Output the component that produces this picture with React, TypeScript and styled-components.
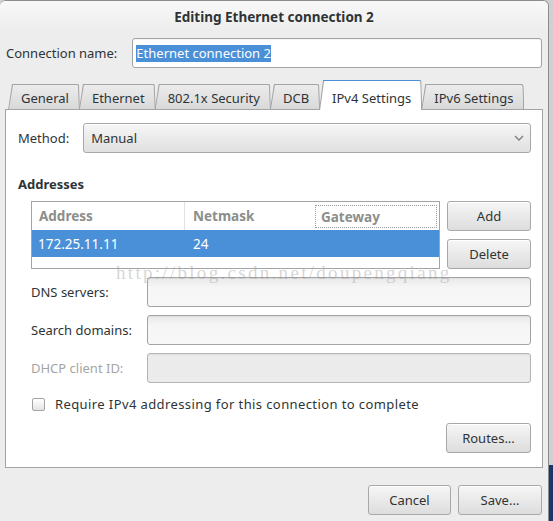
import styled, { createGlobalStyle } from 'styled-components';

const GlobalStyle = createGlobalStyle`
    html, body {
        margin: 0;
        width: 553px;
        height: 521px;
        overflow: hidden;
        background: linear-gradient(180deg, #d0d0d0 0, #d0d0d0 465px, #1b3668 465px);
        font-family: "Noto Sans", "DejaVu Sans", sans-serif;
        font-size: 13px;
        color: #2e3436;
    }
    * {
        box-sizing: border-box;
    }
`;

const Dialog = styled.div`
    position: relative;
    width: 549px;
    height: 521px;
    background: #ededed;
    border-top: 1px solid #8c8c8c;
    border-right: 1px solid #8c8c8c;
    border-radius: 6px 6px 0 0;
    overflow: hidden;
    display: flex;
    flex-direction: column;
`;

const TitleBar = styled.div`
    height: 31px;
    display: flex;
    align-items: center;
    justify-content: center;
    background: linear-gradient(180deg, #f8f8f8, #ededed);
    font-weight: 700;
    font-size: 13.5px;
`;

const NameRow = styled.div`
    display: flex;
    align-items: center;
    gap: 15px;
    padding: 6px 6px 0 6px;
`;

const Label = styled.span<{ $disabled?: boolean }>`
    white-space: nowrap;
    color: ${(p) => (p.$disabled ? '#a4a6a4' : '#2e3436')};
`;

const Entry = styled.div<{ $tone?: 'white' | 'soft' | 'off' }>`
    flex: 1;
    height: 30px;
    display: flex;
    align-items: center;
    padding: 0 3px;
    border: 1px solid ${(p) => (p.$tone === 'off' ? '#b4b4b4' : '#a3a3a3')};
    border-radius: 3px;
    background: ${(p) =>
        p.$tone === 'white'
            ? '#ffffff'
            : p.$tone === 'off'
            ? '#ebebeb'
            : 'linear-gradient(180deg, #e9e9e9 0, #f6f6f6 35%, #f7f7f7 100%)'};
    box-shadow: inset 0 1px 1px rgba(0, 0, 0, 0.05);
`;

const Selected = styled.span`
    background: #4a90d9;
    color: #ffffff;
    line-height: 17px;
`;

const TabRow = styled.div`
    position: relative;
    z-index: 1;
    display: flex;
    align-items: flex-end;
    height: 30px;
    margin: 12px 0 -1px 8px;
`;

const tabShape = 'polygon(4px 0, calc(100% - 1px) 0, 100% 100%, 0 100%)';

const Tab = styled.div<{ $active?: boolean }>`
    position: relative;
    z-index: ${(p) => (p.$active ? 2 : 1)};
    height: ${(p) => (p.$active ? 30 : 26)}px;
    margin-right: -1px;
    padding: 0 11px 3px 13px;
    display: flex;
    align-items: flex-end;
    line-height: 18px;
    white-space: nowrap;
    &::before {
        content: '';
        position: absolute;
        inset: 0;
        background: ${(p) =>
            p.$active ? 'linear-gradient(180deg, #4a90d9 0, #4a90d9 1px, #a4a4a4 1px)' : '#a4a4a4'};
        clip-path: ${tabShape};
        border-radius: 3px 3px 0 0;
    }
    &::after {
        content: '';
        position: absolute;
        inset: ${(p) => (p.$active ? '1px 1px 0 1px' : '1px 1px 1px 1px')};
        background: ${(p) => (p.$active ? '#ffffff' : 'linear-gradient(180deg, #ececec, #d9d9d9)')};
        clip-path: ${tabShape};
        border-radius: 2px 2px 0 0;
    }
    span {
        position: relative;
        z-index: 1;
    }
`;

const Panel = styled.div`
    margin: 0 5px;
    height: 359px;
    background: #ffffff;
    border: 1px solid #a4a4a4;
    padding: 13px 11px 14px 12px;
    display: flex;
    flex-direction: column;
`;

const MethodRow = styled.div`
    display: flex;
    align-items: center;
    gap: 14px;
`;

const Combo = styled.div`
    flex: 1;
    height: 30px;
    display: flex;
    align-items: center;
    justify-content: space-between;
    padding: 0 6px 0 7px;
    border: 1px solid #a8a8a8;
    border-radius: 3px;
    background: linear-gradient(180deg, #f6f6f6, #e0e0e0);
    box-shadow: inset 0 1px #ffffff;
`;

const SectionTitle = styled.div`
    margin-top: 22px;
    font-weight: 700;
    line-height: 18px;
`;

const AddressBlock = styled.div`
    display: flex;
    gap: 7px;
    margin: 8px 0 0 13px;
`;

const Table = styled.div`
    flex: 1;
    height: 68px;
    border: 1px solid #a4a4a4;
    background: #ffffff;
`;

const TableRow = styled.div<{ $head?: boolean }>`
    display: grid;
    grid-template-columns: 153px 129px 1fr;
    height: ${(p) => (p.$head ? 28 : 27)}px;
    background: ${(p) => (p.$head ? '#ffffff' : '#4a90d9')};
    color: ${(p) => (p.$head ? '#8c8e8b' : '#ffffff')};
    font-weight: ${(p) => (p.$head ? 700 : 400)};
    font-size: 13.5px;
`;

const Cell = styled.div<{ $pad?: number; $sep?: boolean; $focus?: boolean }>`
    display: flex;
    align-items: center;
    padding-left: ${(p) => p.$pad ?? 7}px;
    border-right: ${(p) => (p.$sep ? '1px solid #e2e2e2' : 'none')};
    ${(p) => (p.$focus ? 'margin: 3px 2px 2px 1px; border: 1px dotted #9a9a9a; padding-left: 5px;' : '')}
`;

const SideButtons = styled.div`
    display: flex;
    flex-direction: column;
    gap: 8px;
`;

const Button = styled.button<{ $w?: number }>`
    width: ${(p) => p.$w ?? 84}px;
    height: 30px;
    padding: 0;
    border: 1px solid #a8a8a8;
    border-radius: 3px;
    background: linear-gradient(180deg, #f6f6f6, #dddddd);
    box-shadow: inset 0 1px #ffffff;
    font: inherit;
    color: #2e3436;
`;

const FormGrid = styled.div`
    display: grid;
    grid-template-columns: 116px 1fr;
    grid-auto-rows: 30px;
    row-gap: 8px;
    align-items: center;
    margin: 8px 0 0 13px;
`;

const CheckRow = styled.div`
    display: flex;
    align-items: center;
    gap: 10px;
    margin: 14px 0 0 14px;
    height: 14px;
`;

const CheckBox = styled.span`
    width: 13px;
    height: 13px;
    border: 1px solid #a4a4a4;
    border-radius: 2px;
    background: linear-gradient(180deg, #ffffff, #e4e4e4);
`;

const CheckText = styled.span`
    white-space: nowrap;
    letter-spacing: 0.4px;
`;

const RoutesRow = styled.div`
    display: flex;
    justify-content: flex-end;
    margin-top: 12px;
`;

const Footer = styled.div`
    display: flex;
    justify-content: flex-end;
    gap: 7px;
    padding: 17px 6px 0 0;
`;

const Watermark = styled.div`
    position: absolute;
    left: 116px;
    top: 261px;
    font-family: "Liberation Serif", "DejaVu Serif", serif;
    font-size: 19px;
    letter-spacing: 2.3px;
    color: rgba(150, 150, 150, 0.4);
    pointer-events: none;
    white-space: nowrap;
`;

const Chevron = () => (
    <svg width="10" height="6" viewBox="0 0 10 6">
        <path d="M1 1l4 4 4-4" fill="none" stroke="#7b7d7b" strokeWidth="1.3" />
    </svg>
);

const tabs = ['General', 'Ethernet', '802.1x Security', 'DCB', 'IPv4 Settings', 'IPv6 Settings'];

export default function App() {
    return (
        <>
            <GlobalStyle />
            <Dialog>
                <TitleBar>Editing Ethernet connection 2</TitleBar>
                <NameRow>
                    <Label>Connection name:</Label>
                    <Entry $tone="white">
                        <Selected>Ethernet connection 2</Selected>
                    </Entry>
                </NameRow>
                <TabRow>
                    {tabs.map((t) => (
                        <Tab key={t} $active={t === 'IPv4 Settings'}>
                            <span>{t}</span>
                        </Tab>
                    ))}
                </TabRow>
                <Panel>
                    <MethodRow>
                        <Label>Method:</Label>
                        <Combo>
                            <span>Manual</span>
                            <Chevron />
                        </Combo>
                    </MethodRow>
                    <SectionTitle>Addresses</SectionTitle>
                    <AddressBlock>
                        <Table>
                            <TableRow $head>
                                <Cell $sep>Address</Cell>
                                <Cell $pad={8}>Netmask</Cell>
                                <Cell $focus>Gateway</Cell>
                            </TableRow>
                            <TableRow>
                                <Cell $pad={6}>172.25.11.11</Cell>
                                <Cell $pad={8}>24</Cell>
                                <Cell />
                            </TableRow>
                        </Table>
                        <SideButtons>
                            <Button>Add</Button>
                            <Button>Delete</Button>
                        </SideButtons>
                    </AddressBlock>
                    <FormGrid>
                        <Label>DNS servers:</Label>
                        <Entry />
                        <Label>Search domains:</Label>
                        <Entry />
                        <Label $disabled>DHCP client ID:</Label>
                        <Entry $tone="off" />
                    </FormGrid>
                    <CheckRow>
                        <CheckBox />
                        <CheckText>Require IPv4 addressing for this connection to complete</CheckText>
                    </CheckRow>
                    <RoutesRow>
                        <Button $w={85}>Routes...</Button>
                    </RoutesRow>
                </Panel>
                <Footer>
                    <Button $w={83}>Cancel</Button>
                    <Button>Save...</Button>
                </Footer>
                <Watermark>http://blog.csdn.net/doupengqiang</Watermark>
            </Dialog>
        </>
    );
}
